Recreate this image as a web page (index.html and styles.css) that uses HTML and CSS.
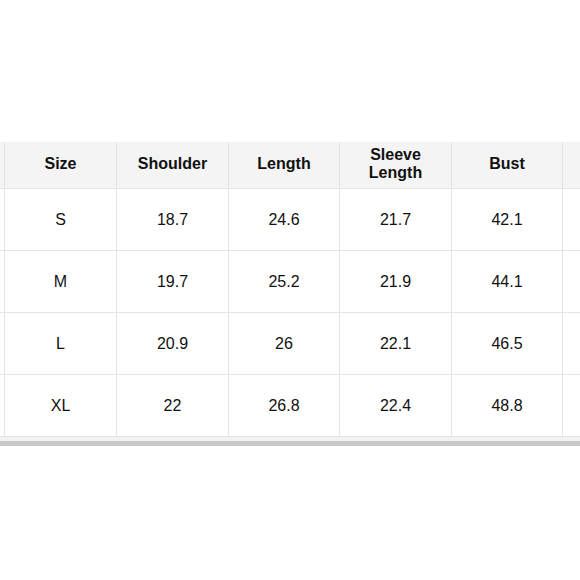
FILE: index.html
```html
<!DOCTYPE html>
<html>
<head>
<meta charset="utf-8">
<link rel="stylesheet" href="styles.css">
</head>
<body>
<div class="page">
  <div class="sheet">
    <div class="grid">
      <div class="cell head"></div>
      <div class="cell head">Size</div>
      <div class="cell head">Shoulder</div>
      <div class="cell head">Length</div>
      <div class="cell head">Sleeve<br>Length</div>
      <div class="cell head">Bust</div>
      <div class="cell head"></div>

      <div class="cell"></div>
      <div class="cell">S</div>
      <div class="cell">18.7</div>
      <div class="cell">24.6</div>
      <div class="cell">21.7</div>
      <div class="cell">42.1</div>
      <div class="cell"></div>

      <div class="cell"></div>
      <div class="cell">M</div>
      <div class="cell">19.7</div>
      <div class="cell">25.2</div>
      <div class="cell">21.9</div>
      <div class="cell">44.1</div>
      <div class="cell"></div>

      <div class="cell"></div>
      <div class="cell">L</div>
      <div class="cell">20.9</div>
      <div class="cell">26</div>
      <div class="cell">22.1</div>
      <div class="cell">46.5</div>
      <div class="cell"></div>

      <div class="cell"></div>
      <div class="cell">XL</div>
      <div class="cell">22</div>
      <div class="cell">26.8</div>
      <div class="cell">22.4</div>
      <div class="cell">48.8</div>
      <div class="cell"></div>
    </div>
    <div class="edge-light"></div>
    <div class="edge-dark"></div>
  </div>
</div>
</body>
</html>
```

FILE: styles.css
```css
html, body {
  margin: 0;
  padding: 0;
  background: #ffffff;
}

.page {
  width: 580px;
  height: 580px;
  padding-top: 142px;
  box-sizing: border-box;
  overflow: hidden;
  font-family: "Liberation Sans", Arial, sans-serif;
  color: #111111;
}

.grid {
  display: grid;
  grid-template-columns: 4px 111px 111px 110px 111px 110px 1fr;
  grid-template-rows: 46px 61px 61px 61px 61px;
  gap: 1px;
  background: #e4e4e4;
  border-bottom: 1px solid #e2e2e2;
}

.cell {
  background: #ffffff;
  display: flex;
  align-items: center;
  justify-content: center;
  text-align: center;
  font-size: 16px;
  line-height: 18px;
}

.cell.head {
  background: #f4f4f4;
  font-weight: bold;
  padding-bottom: 3px;
}

.edge-light {
  height: 4px;
  background: #f3f3f3;
}

.edge-dark {
  height: 5px;
  background: #c9c9c9;
}
```
